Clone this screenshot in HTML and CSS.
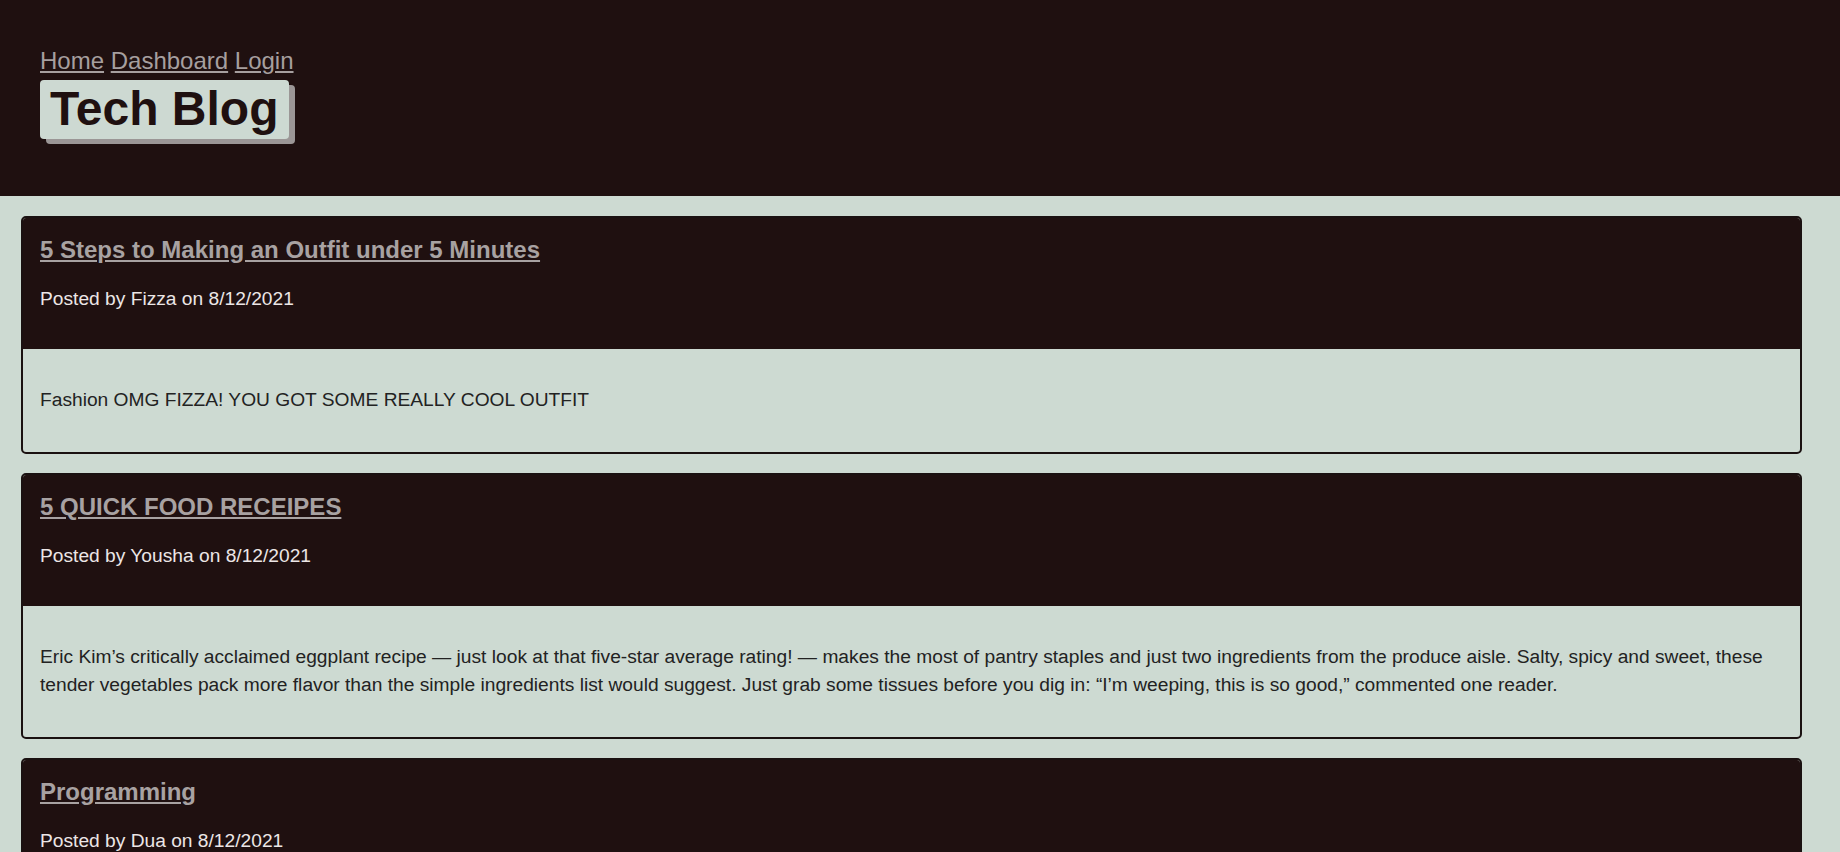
FILE: index.html
```html
<!DOCTYPE html>
<html lang="en">
<head>
<meta charset="utf-8">
<title>Tech Blog</title>
<link rel="stylesheet" href="styles.css">
</head>
<body>
<header class="site-header">
  <nav class="nav"><a href="#">Home</a> <a href="#">Dashboard</a> <a href="#">Login</a></nav>
  <h1 class="brand">Tech Blog</h1>
</header>
<main class="posts">
  <article class="post">
    <div class="post-head">
      <h2 class="post-title"><a href="#">5 Steps to Making an Outfit under 5 Minutes</a></h2>
      <p class="post-meta">Posted by Fizza on 8/12/2021</p>
    </div>
    <div class="post-body">
      <p>Fashion OMG FIZZA! YOU GOT SOME REALLY COOL OUTFIT</p>
    </div>
  </article>
  <article class="post">
    <div class="post-head">
      <h2 class="post-title"><a href="#">5 QUICK FOOD RECEIPES</a></h2>
      <p class="post-meta">Posted by Yousha on 8/12/2021</p>
    </div>
    <div class="post-body">
      <p>Eric Kim’s critically acclaimed eggplant recipe — just look at that five-star average rating! — makes the most of pantry staples and just two ingredients from the produce aisle. Salty, spicy and sweet, these tender vegetables pack more flavor than the simple ingredients list would suggest. Just grab some tissues before you dig in: “I’m weeping, this is so good,” commented one reader.</p>
    </div>
  </article>
  <article class="post">
    <div class="post-head">
      <h2 class="post-title"><a href="#">Programming</a></h2>
      <p class="post-meta">Posted by Dua on 8/12/2021</p>
    </div>
    <div class="post-body">
      <p>Programming is fun!</p>
    </div>
  </article>
</main>
</body>
</html>
```
FILE: styles.css
```css
html, body {
  margin: 0;
  padding: 0;
}

body {
  background: #cddad2;
  font-family: "Liberation Sans", Arial, sans-serif;
  color: #222222;
}

.site-header {
  background: #1f1010;
  padding: 47px 40px 57px;
}

.nav {
  font-size: 24px;
  line-height: 27.6px;
}

.nav a {
  color: #a69f9f;
  text-decoration: underline;
}

.brand {
  display: inline-block;
  margin: 5px 0 0;
  padding: 2px 11px 3px 10px;
  background: #cdd9d2;
  color: #1f1010;
  font-size: 48px;
  font-weight: bold;
  line-height: 54px;
  border-radius: 4px;
  box-shadow: 6px 5px 0 #9b9696;
}

.posts {
  padding: 20px 38px 20px 21px;
  display: flex;
  flex-direction: column;
  gap: 19px;
}

.post {
  border: 2px solid #1a1111;
  border-radius: 5px;
  overflow: hidden;
}

.post-head {
  background: #1f1010;
  padding: 18px 17px 20px;
}

.post-title {
  margin: 0;
  font-size: 24px;
  font-weight: bold;
  line-height: 27.6px;
}

.post-title a {
  color: #a8a2a2;
  text-decoration: underline;
}

.post-meta {
  margin: 25px 0 19px;
  font-size: 19.2px;
  line-height: 22px;
  color: #ece6e6;
}

.post-body {
  padding: 18px 17px;
}

.post-body p {
  margin: 19.2px 0;
  font-size: 19.2px;
  line-height: 28px;
  color: #222222;
}
```
